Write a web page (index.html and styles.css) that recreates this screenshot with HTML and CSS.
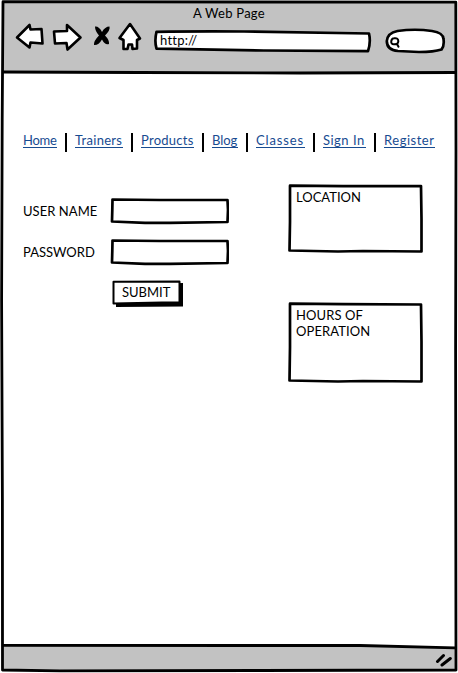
FILE: index.html
```html
<!DOCTYPE html>
<html lang="en">
<head>
<meta charset="utf-8">
<title>A Web Page</title>
<link rel="stylesheet" href="styles.css">
</head>
<body>
<div class="window">
  <svg class="outline" viewBox="0 0 458 673" aria-hidden="true">
    <path class="chrome" d="M3 2L456 3L455 73L3 72Z"/>
    <path class="chrome" d="M3 646L240 645L455 648L455 670L3 671Z"/>
    <path class="line" d="M3 1.7L250 2L455.8 2.2L456 150L455.6 350L455.8 520L456 670L260 670.5L60 670.8L2.5 670L2.4 500L1.6 300L2.2 120Z"/>
    <path class="line" d="M3 72L140 72.5L300 73L455 72.5M3 645.3L240 645.5L360 645.5L455 647.8"/>
  </svg>
  <header class="header">
    <h1 class="title">A Web Page</h1>
    <div class="toolbar">
      <svg class="tools" width="128" height="32" viewBox="15 21 128 32" aria-hidden="true">
        <g class="icon">
          <path d="M17 37.5L29.5 25L30.5 29.5L41.5 29L42.5 43.5L30.5 42.5L29.5 47.5Z"/>
          <path d="M54 31.5L67 31L67 25L80.5 37.5L67.5 49.5L66.5 43L55 43.5Z"/>
          <path d="M130 24L140 38.5L137 40L137 48.5L132.5 49L132 44.5L128.5 44.5L127.5 49L123.5 49L123.5 40L119.5 38Z"/>
        </g>
        <path d="M95 26.5Q99 26 102 32Q105 26.500 109.5 26.500Q110.500 30 105 35.5Q109.500 40 109 44Q105 45.500 102 39.500Q98.500 45.500 94 45Q93.500 41 99 35.500Q95 31 95 26.5Z"/>
      </svg>
      <div class="address">
        <svg class="sketch" viewBox="0 0 218 23" aria-hidden="true"><path class="box" d="M2.5 1.8Q40 1.2 90 1.5L215 3.5Q217 12 214 21.2L110 20.5L2.5 18.7Q.3 11 2.5 1.8Z"/></svg>
        <span class="label">http://</span>
      </div>
      <svg class="search" width="62" height="26" viewBox="385 28 62 26" aria-hidden="true">
        <path class="box" d="M397.500 31Q415 28.5 432 31Q443 32.5 443.5 39Q444.5 46 441.5 49.5Q434 52 419 52L398 51Q386.800 50 386.800 41Q387.500 33 397.500 31Z"/>
        <path class="lens" d="M394 38.3Q398.5 37.5 398.3 41.5Q398 44.5 394 44.3Q390.7 44 391.3 41Q391.8 38.5 394 38.3ZM397 44L398.500 46.7"/>
      </svg>
    </div>
  </header>
  <main class="content">
    <nav class="nav">
      <a class="home" href="#">Home</a><a class="trainers" href="#">Trainers</a><a class="products" href="#">Products</a><a class="blog" href="#">Blog</a><a class="classes" href="#">Classes</a><a class="signin" href="#">Sign In</a><a class="register" href="#">Register</a>
    </nav>
    <div class="columns">
      <form class="login">
        <span class="label user">USER NAME</span>
        <div class="field"><svg class="sketch" viewBox="0 0 119 27" aria-hidden="true"><path class="box" d="M2.500 1.5L50 2L117.500 2L118 12L117.500 24L60 24.8L35 24.800L2 23.5L2.3 12Z"/></svg></div>
        <span class="label pass">PASSWORD</span>
        <div class="field"><svg class="sketch" viewBox="0 0 119 27" aria-hidden="true"><path class="box" d="M2.500 1.5L50 2L117.500 2L118 12L117.500 24L60 24.8L35 24.800L2 23.5L2.3 12Z"/></svg></div>
        <div class="button">
          <svg class="sketch" viewBox="0 0 71 28" aria-hidden="true"><path d="M4 5L71 3L71 26.500L4 27Z"/><path class="thin" d="M1.500 1.8L67.500 1.5L67.500 22.5L50 22.5L1.500 23.5Z"/></svg>
          <span class="label submit">SUBMIT</span>
        </div>
      </form>
      <aside class="panels">
        <section class="panel location">
          <svg class="sketch" viewBox="0 0 135 69" aria-hidden="true"><path class="box" d="M2 1.7L55 2.2L133 2L133.500 35L133.500 67.500L75 67L50 67.5L1.500 66.500L2 38Z"/></svg>
          <span class="label loc">LOCATION</span>
        </section>
        <section class="panel hours">
          <svg class="sketch" viewBox="0 0 135 81" aria-hidden="true"><path class="box" d="M2 1.7L55 2.2L133 2.5L133.500 40L133.500 79.500L75 79L50 79.5L1.500 78.500L2 45Z"/></svg>
          <span class="label hrs1">HOURS OF</span>
          <span class="label hrs2">OPERATION</span>
        </section>
      </aside>
    </div>
  </main>
  <footer class="footer">
    <svg width="18" height="15" viewBox="435 652 18 15" aria-hidden="true"><path class="grip" d="M437.500 661.500L443.500 655.500M442 665L450.300 658.500"/></svg>
  </footer>
</div>
</body>
</html>
```
FILE: styles.css
```css
* { box-sizing: border-box; }
body { margin: 0; background: #fff; color: #000; font: 13px/16px Lato, "Open Sans", sans-serif; }
svg { display: block; }
.window { position: relative; isolation: isolate; width: 458px; height: 673px; display: flex; flex-direction: column; overflow: hidden; }
.outline { position: absolute; inset: 0; width: 458px; height: 673px; z-index: -1; }
.chrome { fill: #c2c2c2; }
.line { fill: none; stroke: #000; stroke-width: 2.8; stroke-linejoin: round; }
.header { height: 73px; padding-top: 6px; }
.title { margin: 0; font-size: 13px; font-weight: 400; line-height: 15px; text-align: center; letter-spacing: .25px; }
.toolbar { display: flex; padding-left: 15px; }
.icon { fill: #fff; stroke: #000; stroke-width: 2.6; stroke-linejoin: round; }
.box, .thin { fill: #fff; stroke: #000; stroke-width: 2.7; stroke-linejoin: round; }
.thin { stroke-width: 2; }
.lens { fill: none; stroke: #000; stroke-width: 2; stroke-linecap: round; }
.grip { fill: none; stroke: #000; stroke-width: 3; stroke-linecap: round; }
.address { position: relative; width: 218px; height: 23px; margin: 9px 0 0 11px; padding: 2px 6px; }
.search { margin: 7px 0 0 13px; }
.sketch { position: absolute; inset: 0; width: 100%; height: 100%; z-index: -1; }
.label { display: block; white-space: nowrap; width: max-content; }
.address .label { letter-spacing: .22px; }
.content { height: 572px; padding: 59px 0 0 23px; }
.nav { display: flex; height: 20px; }
.nav a { height: 16px; color: #174b91; line-height: 16px; text-decoration: none; border-bottom: 1px solid #174b91; white-space: nowrap; }
.nav a + a { position: relative; margin-left: 18px; }
.nav a + a::before { content: ""; position: absolute; left: -10px; top: 1px; width: 2px; height: 19px; background: #000; }
.nav .home { width: 34px; letter-spacing: -.25px; }
.nav .trainers { width: 48px; letter-spacing: .3px; }
.nav .products { width: 53px; letter-spacing: .25px; }
.nav .blog { width: 26px; letter-spacing: -.1px; }
.nav .classes { width: 49px; letter-spacing: .88px; }
.nav .signin { width: 43px; letter-spacing: .5px; }
.nav .register { width: 51px; letter-spacing: .52px; }
.columns { display: flex; padding-top: 32px; }
.login { display: grid; grid-template-columns: 88px 119px; grid-auto-rows: 27px; row-gap: 14px; align-items: center; width: 265px; height: 109px; margin-top: 14px; }
.login > .label { padding-bottom: 2px; }
.field { position: relative; height: 27px; margin: 0 1px 0 -1px; width: 119px; }
.button { position: relative; grid-column: 2; width: 71px; height: 28px; margin-left: 1px; padding: 4px 10px; }
.user { letter-spacing: .05px; }
.panels { display: flex; flex-direction: column; gap: 49px; }
.panel { position: relative; width: 135px; padding: 5px 8px; }
.location { height: 69px; }
.hours { height: 81px; }
.hrs1, .hrs2 { letter-spacing: .1px; }
.footer { display: flex; padding: 7px 5px 0 0; justify-content: flex-end; }
```
